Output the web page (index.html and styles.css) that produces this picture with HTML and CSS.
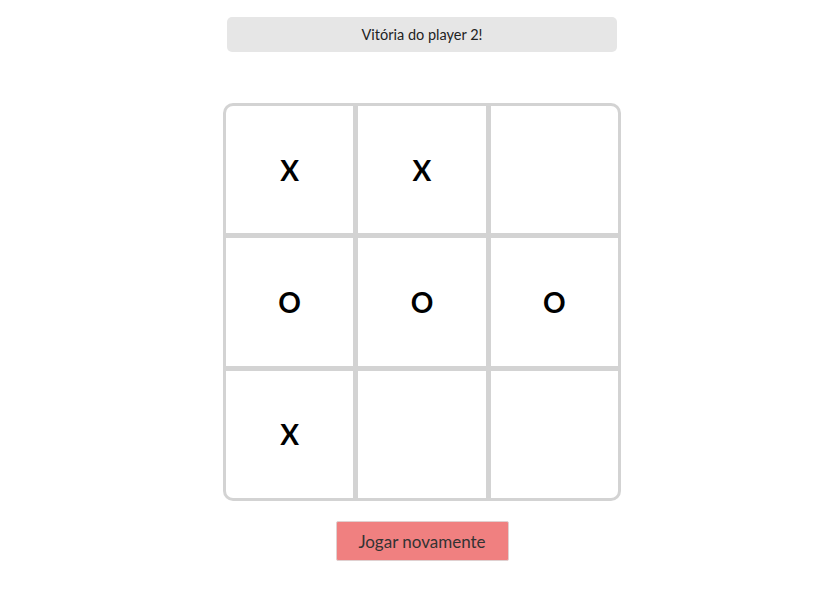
FILE: index.html
```html
<!DOCTYPE html>
<html lang="pt-BR">
<head>
<meta charset="utf-8">
<title>Jogo da velha</title>
<link rel="stylesheet" href="styles.css">
</head>
<body>
<main class="game">
  <div class="status">Vitória do player 2!</div>
  <div class="board">
    <div class="cell">X</div>
    <div class="cell">X</div>
    <div class="cell"></div>
    <div class="cell">O</div>
    <div class="cell">O</div>
    <div class="cell">O</div>
    <div class="cell">X</div>
    <div class="cell"></div>
    <div class="cell"></div>
  </div>
  <button class="restart">Jogar novamente</button>
</main>
</body>
</html>
```
FILE: styles.css
```css
html, body {
  margin: 0;
  padding: 0;
  background: #ffffff;
}
body {
  font-family: "Lato", "Open Sans", sans-serif;
  color: #222;
}
.game {
  width: 398px;
  margin-left: 223px;
  padding-top: 17px;
  display: flex;
  flex-direction: column;
  align-items: center;
}
.status {
  width: 390px;
  height: 35px;
  box-sizing: border-box;
  background: #e6e6e6;
  border-radius: 5px;
  display: flex;
  align-items: center;
  justify-content: center;
  font-size: 14.5px;
  color: #222;
}
.board {
  margin-top: 51px;
  width: 398px;
  height: 398px;
  box-sizing: border-box;
  display: grid;
  grid-template-columns: repeat(3, 1fr);
  grid-template-rows: repeat(3, 1fr);
  gap: 5px;
  padding: 3px;
  background: #d3d3d3;
  border-radius: 10px;
}
.cell {
  background: #fff;
  display: flex;
  align-items: center;
  justify-content: center;
  font-size: 28px;
  font-weight: 700;
  color: #000;
}
.cell:nth-child(1) { border-top-left-radius: 7px; }
.cell:nth-child(3) { border-top-right-radius: 7px; }
.cell:nth-child(7) { border-bottom-left-radius: 7px; }
.cell:nth-child(9) { border-bottom-right-radius: 7px; }
.restart {
  margin-top: 20px;
  width: 173px;
  height: 40px;
  background: #f08080;
  border: 1px solid #e0d0d0;
  border-radius: 2px;
  font-family: "Lato", "Open Sans", sans-serif;
  font-size: 17px;
  color: #333;
  padding: 0;
}
```
